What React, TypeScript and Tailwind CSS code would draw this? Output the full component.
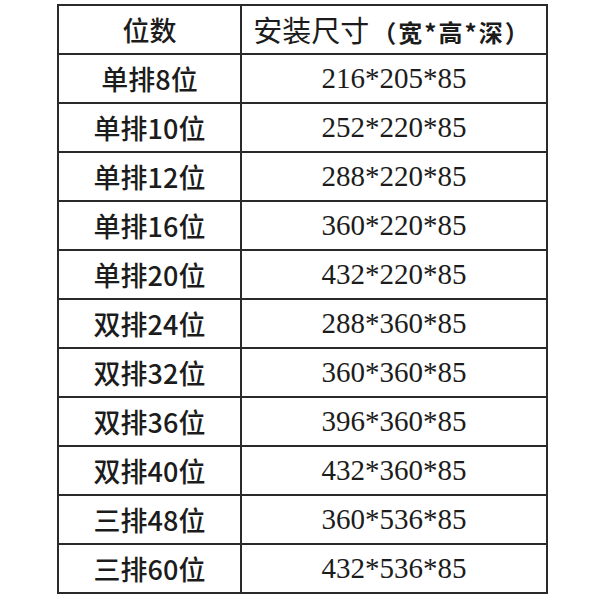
const rows: [string, string][] = [
  ["单排8位", "216*205*85"],
  ["单排10位", "252*220*85"],
  ["单排12位", "288*220*85"],
  ["单排16位", "360*220*85"],
  ["单排20位", "432*220*85"],
  ["双排24位", "288*360*85"],
  ["双排32位", "360*360*85"],
  ["双排36位", "396*360*85"],
  ["双排40位", "432*360*85"],
  ["三排48位", "360*536*85"],
  ["三排60位", "432*536*85"],
];

const cjk = "font-['Noto_Sans_CJK_SC','Noto_Sans',sans-serif]";

export default function App() {
  return (
    <div className="w-[600px] h-[600px] bg-white pt-[4px] pl-[57px]">
      <table className="border-collapse w-[489px] table-fixed text-[#1c1c1c]">
        <colgroup>
          <col className="w-[183px]" />
          <col className="w-[306px]" />
        </colgroup>
        <thead>
          <tr className="h-[49px]">
            <th className={`border-2 border-[#2a2a2a] text-[27px] font-medium leading-none ${cjk}`}>
              位数
            </th>
            <th className={`border-2 border-[#2a2a2a] leading-none font-normal pr-[4px] ${cjk}`}>
              <span className="text-[29px]">安装尺寸</span>
              <span className="text-[24px] font-bold tracking-[2px] pl-[3px]">（宽*高*深）</span>
            </th>
          </tr>
        </thead>
        <tbody>
          {rows.map(([name, size]) => (
            <tr key={name} className="h-[49px]">
              <td
                className={`border-2 border-[#2a2a2a] text-center text-[27px] font-medium leading-none ${cjk}`}
              >
                {name}
              </td>
              <td className="border-2 border-[#2a2a2a] text-center text-[29px] leading-none font-['Liberation_Serif',serif]">
                {size}
              </td>
            </tr>
          ))}
        </tbody>
      </table>
    </div>
  );
}
